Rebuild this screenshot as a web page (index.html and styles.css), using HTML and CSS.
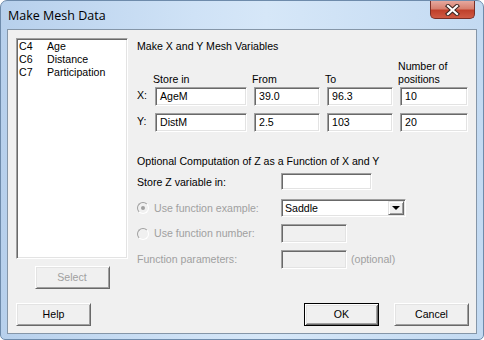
FILE: index.html
```html
<!DOCTYPE html>
<html lang="en">
<head>
    <meta charset="UTF-8">
    <title>Make Mesh Data</title>
    <link rel="stylesheet" href="styles.css">
</head>
<body>
    <div class="window">
        <div class="titlebar">
            <span class="title">Make Mesh Data</span>
            <div class="close">
                <svg width="17" height="12" viewBox="0 0 17 12">
                    <path d="M4 2 L13 10 M13 2 L4 10" stroke="#3b2420" stroke-width="4.2" stroke-linecap="square"/>
                    <path d="M4 2 L13 10 M13 2 L4 10" stroke="#fff" stroke-width="2.2" stroke-linecap="square"/>
                </svg>
            </div>
        </div>

        <div class="client">
            <div class="main">
                <!-- column list -->
                <div class="left">
                    <div class="listbox">
                        <div class="item"><span class="col">C4</span>Age</div>
                        <div class="item"><span class="col">C6</span>Distance</div>
                        <div class="item"><span class="col">C7</span>Participation</div>
                    </div>
                    <div class="btn disabled select-btn">Select</div>
                </div>

                <div class="right">
                    <div class="section-title">Make X and Y Mesh Variables</div>

                    <div class="mesh mesh-head">
                        <span></span>
                        <span class="head">Store in</span>
                        <span class="head">From</span>
                        <span class="head">To</span>
                        <span class="head">Number of<br>positions</span>
                    </div>
                    <div class="mesh mesh-rows">
                        <span class="axis">X:</span>
                        <div class="field">AgeM</div>
                        <div class="field">39.0</div>
                        <div class="field">96.3</div>
                        <div class="field">10</div>
                        <span class="axis">Y:</span>
                        <div class="field">DistM</div>
                        <div class="field">2.5</div>
                        <div class="field">103</div>
                        <div class="field">20</div>
                    </div>

                    <div class="opt-title">Optional Computation of Z as a Function of X and Y</div>

                    <div class="zgrid">
                        <span class="zlabel">Store Z variable in:</span>
                        <div class="field store-z"></div>

                        <span class="zlabel muted"><span class="radio checked"></span>Use function example:</span>
                        <div class="combo">
                            <span class="combo-text">Saddle</span>
                            <span class="combo-btn"><span class="arrow"></span></span>
                        </div>

                        <span class="zlabel muted"><span class="radio"></span>Use function number:</span>
                        <div class="field off small"></div>

                        <span class="zlabel muted">Function parameters:</span>
                        <div class="zrow">
                            <div class="field off small"></div>
                            <span class="muted hint">(optional)</span>
                        </div>
                    </div>
                </div>
            </div>

            <div class="footer">
                <div class="btn">Help</div>
                <div class="btn default ok-btn">OK</div>
                <div class="btn">Cancel</div>
            </div>
        </div>
    </div>
</body>
</html>
```

FILE: styles.css
```css
body {
    margin: 0;
    font-family: "Liberation Sans", Tahoma, sans-serif;
    font-size: 10.6px;
    line-height: 13px;
    color: #000;
}

/* 窗口外框 */
.window {
    width: 484px;
    height: 340px;
    box-sizing: border-box;
    border: 1px solid #6e8bab;
    border-radius: 7px 7px 5px 5px;
    padding: 0 6px 5px 6px;
    display: flex;
    flex-direction: column;
    background: linear-gradient(to right, #b7d0ec 0%, #cfe2f6 40%, #d6e7f8 55%, #c3daf2 100%);
}

.titlebar {
    height: 28px;
    display: flex;
    align-items: flex-start;
}

.title {
    margin: 7px 0 0 1px;
    font-family: "Open Sans", "Noto Sans", sans-serif;
    font-size: 12.5px;
    line-height: 16px;
}

.close {
    margin-left: auto;
    margin-right: 2px;
    width: 45px;
    height: 18px;
    box-sizing: border-box;
    border: 1px solid #7a2f27;
    border-top: none;
    border-radius: 0 0 5px 5px;
    background: linear-gradient(to bottom, #e6a89e 0%, #d7806f 45%, #c0402b 55%, #cf5a44 100%);
    display: flex;
    justify-content: center;
    align-items: center;
}

/* 客户区 */
.client {
    flex: 1;
    border: 1px solid #8596a8;
    background-color: #f0f0f0;
    padding: 8px 7px 0 8px;
    display: flex;
    flex-direction: column;
}

.main {
    display: flex;
}

.left {
    width: 112px;
    display: flex;
    flex-direction: column;
    align-items: center;
}

.listbox {
    width: 112px;
    height: 221px;
    box-sizing: border-box;
    background-color: #fff;
    border: 1px solid;
    border-color: #a0a0a0 #fff #fff #a0a0a0;
    box-shadow: inset 1px 1px 0 #696969, inset -1px -1px 0 #e3e3e3;
    padding: 1px 2px;
}

.item .col {
    display: inline-block;
    width: 28px;
}

/* 按钮 */
.btn {
    width: 75px;
    height: 23px;
    box-sizing: border-box;
    border: 1px solid;
    border-color: #fff #696969 #696969 #fff;
    box-shadow: inset 1px 1px 0 #e3e3e3, inset -1px -1px 0 #a0a0a0;
    display: flex;
    justify-content: center;
    align-items: center;
}

.btn.default {
    border: 1px solid #000;
    box-shadow: inset 1px 1px 0 #fff, inset -1px -1px 0 #696969, inset 2px 2px 0 #e3e3e3, inset -2px -2px 0 #a0a0a0;
}

.btn.disabled {
    color: #a0a0a0;
}

.select-btn {
    margin-top: 7px;
}

.right {
    margin-left: 9px;
    flex: 1;
}

.section-title {
    margin-top: 2px;
}

.mesh {
    display: grid;
    grid-template-columns: 11px 92px 66px 66px 68px;
    column-gap: 7px;
}

.mesh-head {
    margin-top: 7px;
    align-items: end;
}

.head {
    margin-left: -2px;
}

.mesh-rows {
    margin-top: 1px;
    row-gap: 7px;
    align-items: center;
}

.axis {
    margin-top: -2px;
}

/* 输入框 */
.field {
    height: 19px;
    box-sizing: border-box;
    background-color: #fff;
    border: 1px solid;
    border-color: #a0a0a0 #fff #fff #a0a0a0;
    box-shadow: inset 1px 1px 0 #696969, inset -1px -1px 0 #e3e3e3;
    padding: 2px 0 0 4px;
}

.field.off {
    background-color: #f0f0f0;
}

.opt-title {
    margin-top: 23px;
}

.zgrid {
    margin-top: 5px;
    display: grid;
    grid-template-columns: 144px auto;
    row-gap: 7px;
    align-items: center;
}

.zlabel {
    display: flex;
    align-items: center;
}

.store-z {
    width: 91px;
    height: 17px;
    margin-bottom: 2px;
}

.small {
    width: 66px;
}

.muted {
    color: #a0a0a0;
}

.zrow {
    display: flex;
    align-items: center;
}

.hint {
    margin-left: 4px;
}

.radio {
    width: 12px;
    height: 12px;
    box-sizing: border-box;
    border-radius: 50%;
    border: 1px solid;
    border-color: #a0a0a0 #fff #fff #a0a0a0;
    background-color: #f0f0f0;
    margin-right: 5px;
    display: flex;
    justify-content: center;
    align-items: center;
}

.radio.checked::after {
    content: "";
    width: 4px;
    height: 4px;
    border-radius: 50%;
    background-color: #a0a0a0;
}

/* 下拉框 */
.combo {
    width: 125px;
    height: 18px;
    box-sizing: border-box;
    background-color: #fff;
    border: 1px solid;
    border-color: #a0a0a0 #fff #fff #a0a0a0;
    box-shadow: inset 1px 1px 0 #696969, inset -1px -1px 0 #e3e3e3;
    display: flex;
    align-items: center;
    padding: 1px;
}

.combo-text {
    flex: 1;
    padding-left: 2px;
}

.combo-btn {
    width: 16px;
    height: 14px;
    box-sizing: border-box;
    background-color: #f0f0f0;
    border: 1px solid;
    border-color: #e3e3e3 #696969 #696969 #e3e3e3;
    box-shadow: inset 1px 1px 0 #fff, inset -1px -1px 0 #a0a0a0;
    display: flex;
    justify-content: center;
    align-items: center;
}

.arrow {
    width: 0;
    height: 0;
    border-left: 4px solid transparent;
    border-right: 4px solid transparent;
    border-top: 4px solid #000;
}

.footer {
    margin-top: 14px;
    display: flex;
}

.ok-btn {
    margin-left: auto;
    margin-right: 15px;
}
```
